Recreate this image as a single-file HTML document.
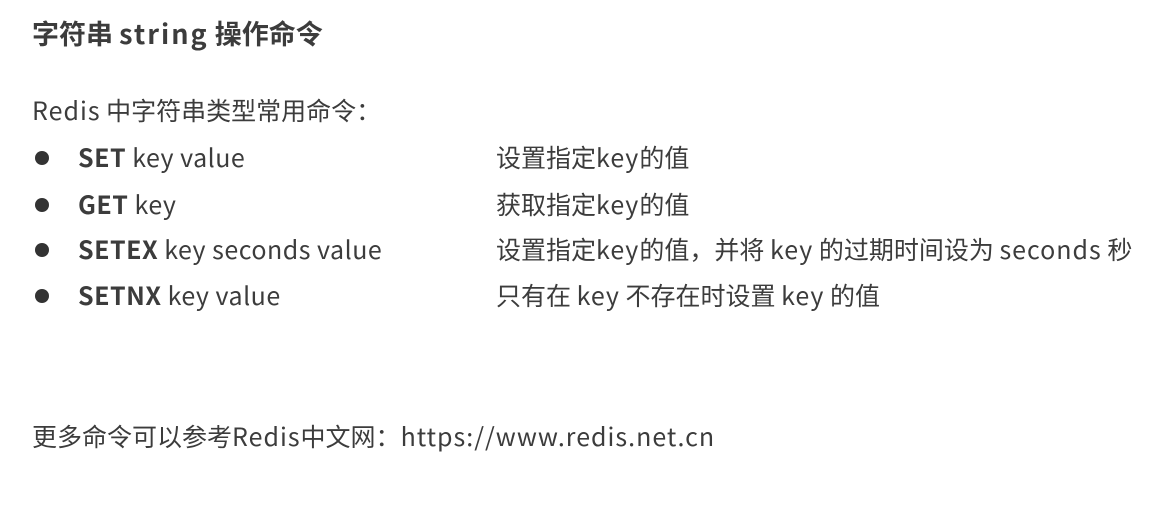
<!DOCTYPE html>
<html><head><meta charset="utf-8"><style>
html,body{margin:0;padding:0;background:#fff;width:1170px;height:519px;overflow:hidden}
body{font-family:"Noto Sans CJK SC",sans-serif;color:#3c3c3c;position:relative}
.a{position:absolute;white-space:nowrap;font-size:25px;line-height:30px}
.t{font-size:27px;font-weight:bold;top:18px;left:32px}
.dot{position:absolute;left:35px;width:14px;height:14px;border-radius:50%;background:#333}
b{font-weight:bold}
i{font-style:normal;letter-spacing:1px}
i.l{letter-spacing:0.5px}
</style></head><body>
<div class="a t">字符串 <i style="letter-spacing:2px">string</i> 操作命令</div>
<div class="a" style="left:32px;top:95px"><i>Redis</i> 中字符串类型常用命令：</div>

<div class="dot" style="top:151px"></div>
<div class="a" style="left:78px;top:142px"><i class="l"><b>SET</b> key value</i></div>
<div class="a" style="left:496px;top:142px">设置指定<i>key</i>的值</div>

<div class="dot" style="top:198px"></div>
<div class="a" style="left:78px;top:189px"><i class="l"><b>GET</b> key</i></div>
<div class="a" style="left:496px;top:189px">获取指定<i>key</i>的值</div>

<div class="dot" style="top:243px"></div>
<div class="a" style="left:78px;top:234px"><i class="l"><b>SETEX</b> key seconds value</i></div>
<div class="a" style="left:496px;top:234px">设置指定<i>key</i>的值，并将 <i>key</i> 的过期时间设为 <i>seconds</i> 秒</div>

<div class="dot" style="top:289px"></div>
<div class="a" style="left:78px;top:280px"><i class="l"><b>SETNX</b> key value</i></div>
<div class="a" style="left:496px;top:280px">只有在 <i>key</i> 不存在时设置 <i>key</i> 的值</div>

<div class="a" style="left:32px;top:421px">更多命令可以参考<i>Redis</i>中文网：<i>https://www.redis.net.cn</i></div>
</body></html>
